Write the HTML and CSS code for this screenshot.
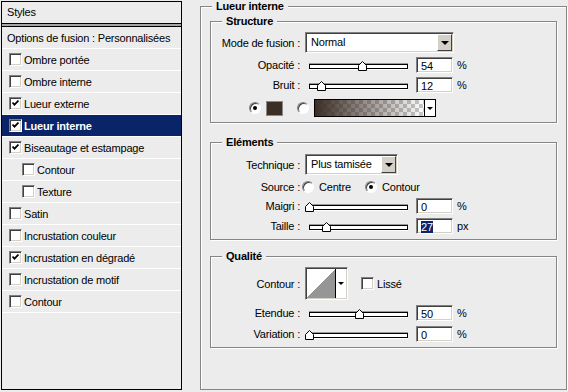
FILE: index.html
```html
<!DOCTYPE html>
<html lang="fr">
<head>
<meta charset="UTF-8">
<title>Style de calque - Lueur interne</title>
<link rel="stylesheet" href="styles.css">
</head>
<body>
  <div class="dialog">
    <div class="styles-panel">
      <div class="panel-head">Styles</div>
      <div class="panel-rule"></div>
      <div class="panel-row plain">Options de fusion : Personnalisées</div>
      <div class="panel-row"><span class="check"></span>Ombre portée</div>
      <div class="panel-row"><span class="check"></span>Ombre interne</div>
      <div class="panel-row"><span class="check"><svg class="tick" width="7" height="7" viewBox="0 0 7 7"><path d="M0.5 2.5 L2.5 4.6 L6.5 0.6"/></svg></span>Lueur externe</div>
      <div class="panel-row selected"><span class="check"><svg class="tick" width="7" height="7" viewBox="0 0 7 7"><path d="M0.5 2.5 L2.5 4.6 L6.5 0.6"/></svg></span>Lueur interne</div>
      <div class="panel-row"><span class="check"><svg class="tick" width="7" height="7" viewBox="0 0 7 7"><path d="M0.5 2.5 L2.5 4.6 L6.5 0.6"/></svg></span>Biseautage et estampage</div>
      <div class="panel-row sub"><span class="check"></span>Contour</div>
      <div class="panel-row sub"><span class="check"></span>Texture</div>
      <div class="panel-row"><span class="check"></span>Satin</div>
      <div class="panel-row"><span class="check"></span>Incrustation couleur</div>
      <div class="panel-row"><span class="check"><svg class="tick" width="7" height="7" viewBox="0 0 7 7"><path d="M0.5 2.5 L2.5 4.6 L6.5 0.6"/></svg></span>Incrustation en dégradé</div>
      <div class="panel-row"><span class="check"></span>Incrustation de motif</div>
      <div class="panel-row"><span class="check"></span>Contour</div>
    </div>

    <fieldset class="group outer">
      <legend>Lueur interne</legend>

      <fieldset class="group inner">
        <legend>Structure</legend>
        <div class="field-row row-select">
          <span class="field-label">Mode de fusion :</span>
          <div class="select mode"><span class="select-value">Normal</span><span class="select-btn"></span></div>
        </div>
        <div class="field-row">
          <span class="field-label">Opacité :</span>
          <div class="slider"><span class="thumb" style="left:54%"><svg width="9" height="10" viewBox="0 0 9 10"><path d="M0.5 4.5 L4.5 0.5 L8.5 4.5 L8.5 9.5 L0.5 9.5 Z"/></svg></span></div>
          <div class="num">54</div><span class="unit">%</span>
        </div>
        <div class="field-row">
          <span class="field-label">Bruit :</span>
          <div class="slider"><span class="thumb" style="left:12%"><svg width="9" height="10" viewBox="0 0 9 10"><path d="M0.5 4.5 L4.5 0.5 L8.5 4.5 L8.5 9.5 L0.5 9.5 Z"/></svg></span></div>
          <div class="num">12</div><span class="unit">%</span>
        </div>
        <div class="field-row row-color">
          <span class="radio on color-radio"></span>
          <span class="swatch"></span>
          <span class="radio gradient-radio"></span>
          <div class="gradient"><span class="gradient-fill"></span><span class="mini-arrow"></span></div>
        </div>
      </fieldset>

      <fieldset class="group inner elements">
        <legend>Eléments</legend>
        <div class="field-row row-select loose">
          <span class="field-label">Technique :</span>
          <div class="select technique"><span class="select-value">Plus tamisée</span><span class="select-btn"></span></div>
        </div>
        <div class="field-row row-source loose">
          <span class="field-label">Source :</span>
          <label class="radio-option first"><span class="radio"></span>Centre</label>
          <label class="radio-option"><span class="radio on"></span>Contour</label>
        </div>
        <div class="field-row">
          <span class="field-label">Maigri :</span>
          <div class="slider"><span class="thumb" style="left:0%"><svg width="9" height="10" viewBox="0 0 9 10"><path d="M0.5 4.5 L4.5 0.5 L8.5 4.5 L8.5 9.5 L0.5 9.5 Z"/></svg></span></div>
          <div class="num">0</div><span class="unit">%</span>
        </div>
        <div class="field-row">
          <span class="field-label">Taille :</span>
          <div class="slider"><span class="thumb" style="left:17%"><svg width="9" height="10" viewBox="0 0 9 10"><path d="M0.5 4.5 L4.5 0.5 L8.5 4.5 L8.5 9.5 L0.5 9.5 Z"/></svg></span></div>
          <div class="num"><span class="selection">27</span></div><span class="unit">px</span>
        </div>
      </fieldset>

      <fieldset class="group inner quality">
        <legend>Qualité</legend>
        <div class="field-row row-contour">
          <span class="field-label">Contour :</span>
          <div class="curve-picker"><span class="curve"></span><span class="mini-arrow"></span></div>
          <span class="check lisse"></span><span class="check-text">Lissé</span>
        </div>
        <div class="field-row loose">
          <span class="field-label">Etendue :</span>
          <div class="slider"><span class="thumb" style="left:50%"><svg width="9" height="10" viewBox="0 0 9 10"><path d="M0.5 4.5 L4.5 0.5 L8.5 4.5 L8.5 9.5 L0.5 9.5 Z"/></svg></span></div>
          <div class="num">50</div><span class="unit">%</span>
        </div>
        <div class="field-row loose">
          <span class="field-label">Variation :</span>
          <div class="slider"><span class="thumb" style="left:0%"><svg width="9" height="10" viewBox="0 0 9 10"><path d="M0.5 4.5 L4.5 0.5 L8.5 4.5 L8.5 9.5 L0.5 9.5 Z"/></svg></span></div>
          <div class="num">0</div><span class="unit">%</span>
        </div>
      </fieldset>
    </fieldset>
  </div>
</body>
</html>
```

FILE: styles.css
```css
body {
  margin: 0;
  background: #ececec;
  font-family: "Liberation Sans", Arial, sans-serif;
  font-size: 11px;
  letter-spacing: -0.2px;
  color: #000;
}
.dialog {
  display: flex;
  align-items: flex-start;
}

/* left list of styles */
.styles-panel {
  width: 181px;
  height: 389px;
  margin: 1px 0 0 1px;
  border: 1px solid #000;
  box-sizing: border-box;
}
.panel-head {
  height: 21px;
  line-height: 21px;
  padding-left: 5px;
}
.panel-rule {
  height: 2px;
  background: #a6a6a6;
  border-top: 1px solid #000;
  border-bottom: 1px solid #000;
}
.panel-row {
  height: 21px;
  border-bottom: 1px solid #fff;
  display: flex;
  align-items: center;
  padding-left: 7px;
}
.panel-row.plain {
  padding-left: 5px;
}
.panel-row.sub {
  padding-left: 20px;
}
.panel-row .check {
  margin-right: 2px;
}
.panel-row.selected {
  background: #0a246a;
  color: #fff;
  font-weight: bold;
}

/* classic sunken controls */
.check {
  width: 13px;
  height: 13px;
  flex: none;
  box-sizing: border-box;
  background: #fff;
  border: 1px solid;
  border-color: #808080 #fff #fff #808080;
  box-shadow: inset 1px 1px #404040, inset -1px -1px #d4d0c8;
  display: flex;
  align-items: center;
  justify-content: center;
}
.tick path {
  fill: none;
  stroke: #000;
  stroke-width: 1.8;
}
.radio {
  width: 12px;
  height: 12px;
  flex: none;
  box-sizing: border-box;
  border-radius: 50%;
  background: #fff;
  border: 1px solid;
  border-color: #808080 #fff #fff #808080;
  box-shadow: inset 1px 1px #404040;
  display: flex;
  align-items: center;
  justify-content: center;
}
.radio.on::after {
  content: "";
  width: 4px;
  height: 4px;
  border-radius: 50%;
  background: #000;
}

/* group boxes */
.group {
  margin: 0;
  min-width: 0;
  border: 1px solid #858585;
  box-shadow: inset 1px 1px #fff, 1px 1px #fff;
}
.group legend {
  font-weight: bold;
  line-height: 13px;
  background: #ececec;
}
.outer {
  width: 367px;
  box-sizing: border-box;
  margin-left: 18px;
  padding: 2px 9px 41px;
}
.outer > legend {
  margin-left: 2px;
  padding: 0 4px;
}
.inner {
  padding: 0 0 5px;
}
.inner legend {
  margin-left: 11px;
  padding: 0 4px;
}
.elements {
  margin-top: 13px;
}
.quality {
  margin-top: 10px;
}

/* rows */
.field-row {
  display: flex;
  align-items: center;
  height: 16px;
  margin-top: 4px;
}
.field-row.loose {
  margin-top: 5px;
}
.row-select {
  height: 21px;
}
.row-color {
  height: 18px;
  margin-top: 6px;
}
.row-source {
  height: 14px;
}
.row-contour {
  height: 33px;
}
.field-label {
  width: 89px;
  flex: none;
  text-align: right;
}

/* dropdowns */
.select {
  display: flex;
  height: 21px;
  box-sizing: border-box;
  margin-left: 5px;
  padding: 1px;
  background: #fff;
  border: 1px solid;
  border-color: #808080 #fff #fff #808080;
  box-shadow: inset 1px 1px #404040, inset -1px -1px #d4d0c8;
}
.select.mode {
  width: 149px;
}
.select.technique {
  width: 93px;
}
.select-value {
  flex: 1;
  padding-left: 4px;
  line-height: 17px;
}
.select-btn {
  width: 15px;
  box-sizing: border-box;
  background: #d4d0c8;
  border: 1px solid;
  border-color: #fff #404040 #404040 #fff;
  display: flex;
  align-items: center;
  justify-content: center;
}
.select-btn::after,
.mini-arrow::after {
  content: "";
  border-top: 4px solid #000;
  border-left: 4px solid transparent;
  border-right: 4px solid transparent;
}
.mini-arrow {
  width: 10px;
  display: flex;
  align-items: center;
  justify-content: center;
}
.mini-arrow::after {
  border-top-width: 3px;
  border-left-width: 3px;
  border-right-width: 3px;
}

/* sliders and values */
.slider {
  position: relative;
  width: 99px;
  height: 16px;
  margin-left: 9px;
}
.slider::before {
  content: "";
  position: absolute;
  left: 0;
  right: 0;
  top: 7px;
  height: 5px;
  box-sizing: border-box;
  border: 1px solid #000;
  background: #fff;
  box-shadow: 0 -1px #9a9a9a, 0 1px #fff;
}
.thumb {
  position: absolute;
  top: 4px;
  width: 9px;
  height: 10px;
  margin-left: -4px;
}
.thumb svg {
  display: block;
}
.thumb path {
  fill: #fff;
  stroke: #000;
}
.num {
  width: 37px;
  height: 16px;
  box-sizing: border-box;
  margin-left: 8px;
  padding: 2px 0 0 4px;
  line-height: 12px;
  background: #fff;
  border: 1px solid;
  border-color: #808080 #fff #fff #808080;
  box-shadow: inset 1px 1px #404040, inset -1px -1px #d4d0c8;
}
.selection {
  background: #0a246a;
  color: #fff;
}
.unit {
  margin-left: 4px;
}

/* colour row */
.color-radio {
  margin-left: 38px;
}
.swatch {
  width: 17px;
  height: 15px;
  box-sizing: border-box;
  margin-left: 5px;
  background: #3b2e25;
  border: 1px solid #8a8a8a;
}
.gradient-radio {
  margin-left: 14px;
}
.gradient {
  display: flex;
  width: 122px;
  height: 18px;
  box-sizing: border-box;
  margin-left: 5px;
  background: #fff;
  border: 1px solid #000;
}
.gradient-fill {
  flex: 1;
  border-right: 1px solid #000;
  background: linear-gradient(to right, #3b2e25, rgba(59, 46, 37, 0)),
    repeating-conic-gradient(#c8c8c8 0 25%, #fff 0 50%) 0 0 / 8px 8px;
}

/* source radios */
.radio-option {
  display: flex;
  align-items: center;
  gap: 5px;
}
.radio-option.first {
  width: 63px;
  margin-left: 2px;
}

/* contour picker */
.curve-picker {
  display: flex;
  width: 43px;
  height: 33px;
  box-sizing: border-box;
  margin-left: 5px;
  padding: 1px;
  background: #fff;
  border: 1px solid;
  border-color: #808080 #fff #fff #808080;
  box-shadow: inset 1px 1px #404040, inset -1px -1px #d4d0c8;
}
.curve {
  flex: 1;
  border-right: 1px solid #000;
  background: linear-gradient(to bottom right, #fff 50%, #969696 50%);
}
.check.lisse {
  margin-left: 13px;
}
.check-text {
  margin-left: 3px;
}
```
